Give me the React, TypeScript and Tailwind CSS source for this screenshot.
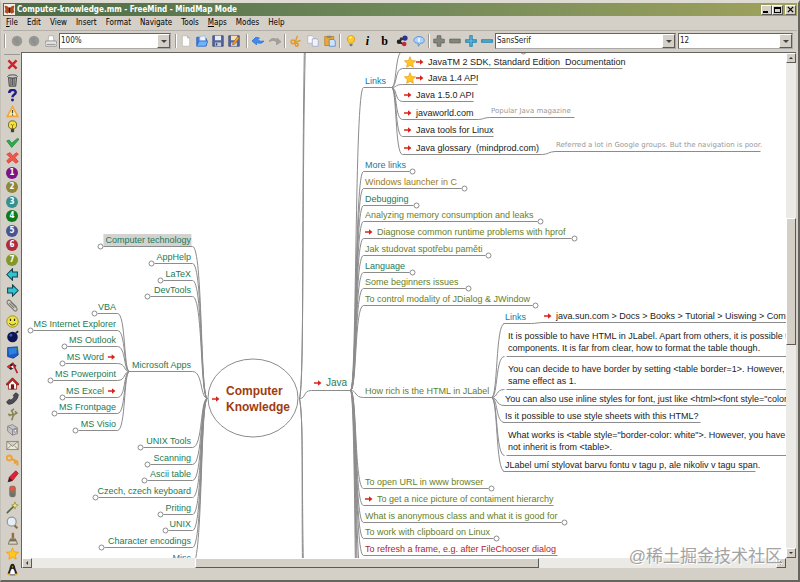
import { ReactNode } from "react";
import { twMerge } from "tailwind-merge";

type IconName = keyof typeof ICONS;

// every glyph is drawn on a 16x16 grid
const ICONS = {
  disc: (
    <>
      <circle cx="8" cy="8" r="7" fill="#989894" />
      <path d="M4 5l3-2 4 1-2 3 3 2-3 4-4-3z" fill="#8f8f8b" />
    </>
  ),
  printer: (
    <>
      <path d="M5 1h6l1 7H4z" fill="#fff" stroke="#aaa" />
      <path d="M1 8h14l1 5-1 2H1l-1-2z" fill="#e4e4e4" stroke="#888" />
      <path d="M2 12.500h12" stroke="#777" />
    </>
  ),
  page: (
    <path d="M3 1h7l3 3v11H3zM10 1v3h3" fill="#fdfdfd" stroke="#b4b4b0" />
  ),
  open: (
    <>
      <path d="M1 14V3h5l1 2h7v9z" fill="#3f7ee0" stroke="#2256b5" />
      <path d="M5 2l7-1 1 7H5z" fill="#eef5ff" stroke="#8fb0e0" />
      <path d="M1 15L4 8h12l-3 7z" fill="#6fb4f7" stroke="#2864c8" />
    </>
  ),
  save: (
    <>
      <path d="M1 1h14v14H1z" fill="#5565a0" stroke="#3b4677" />
      <path d="M4 1h8v6H4z" fill="#e8ecf4" />
      <path d="M4 10h8v5H4z" fill="#c8ccd6" />
      <path d="M5 11h2v3H5z" fill="#39416b" />
    </>
  ),
  saveAs: (
    <>
      <path d="M1 1h14v14H1z" fill="#5565a0" stroke="#3b4677" />
      <path d="M4 1h8v6H4z" fill="#f3e4b0" />
      <path d="M4 10h8v5H4z" fill="#c8ccd6" />
      <path d="M6 13l1-3 6-8 2 2-6 8z" fill="#f4a82a" stroke="#a8641a" />
    </>
  ),
  undo: (
    <path
      d="M5 3L0 8l6 5v-3c4 2 8 1 10-2-4 1-7 0-8-2l2-2z"
      fill="#3c8cf0"
      stroke="#2a6fd0"
    />
  ),
  redo: (
    <path
      d="M11 4l5 5-6 4v-3C9 7 5 6 0 9c1-4 6-6 10-3z"
      fill="#a2a29c"
      stroke="#96968f"
    />
  ),
  cut: (
    <>
      <path d="M10 1L7 9M14 7L7 10" stroke="#d6a23c" strokeWidth="2" />
      <circle cx="4" cy="9" r="2.500" fill="none" stroke="#e8982a" strokeWidth="2" />
      <circle cx="9" cy="13" r="2" fill="none" stroke="#e8982a" strokeWidth="2" />
    </>
  ),
  copy: (
    <>
      <path d="M1 1h6l2 2v8H1z" fill="#fafaff" stroke="#a9adbd" />
      <path d="M7 5h6l2 2v8H7z" fill="#f0f2fb" stroke="#9ba0b8" />
    </>
  ),
  paste: (
    <>
      <path d="M1 2h12v12H1z" fill="#e9a93a" stroke="#b87c20" />
      <path d="M4 1h6v3H4z" fill="#888" />
      <path d="M7 6h6l2 2v7H7z" fill="#cfe2fb" stroke="#4b7dc6" />
    </>
  ),
  bulb: (
    <>
      <path
        d="M8 1c-3 0-5 2-5 4.500C3 8 5 9 6 11h4c1-2 3-3 3-5.500C13 3 11 1 8 1z"
        fill="#ffc928"
        stroke="#d18f15"
      />
      <path d="M6 4c1-1 2-1 3-1" stroke="#fff6c0" strokeWidth="2" />
      <path d="M6 12h4v2H9v1H7v-1H6z" fill="#77776f" />
    </>
  ),
  nodes: (
    <>
      <path d="M4 8l7-4M4 9l7 4" stroke="#222" strokeWidth="2" />
      <circle cx="4" cy="9" r="3" fill="#222" />
      <circle cx="12" cy="4" r="3.500" fill="#27349c" />
      <circle cx="11" cy="12" r="3" fill="#c22a36" />
      <circle cx="7" cy="5" r="2" fill="#334" />
    </>
  ),
  cloud: (
    <>
      <path
        d="M8 2c4 0 7 2 7 5s-2 4-5 4l-3 4V11C3 11 1 9 1 7s3-5 7-5z"
        fill="#a9d3fa"
        stroke="#3f84d6"
      />
      <path d="M8 4v5" stroke="#fff" strokeWidth="2" />
    </>
  ),
  plusGray: (
    <path
      d="M5.500 1h5v4.500H15v5h-4.500V15h-5v-4.500H1v-5h4.500z"
      fill="#85857d"
      stroke="#5c5c55"
    />
  ),
  minusGray: <path d="M1 5.500h14v5H1z" fill="#85857d" stroke="#5c5c55" />,
  plusBlue: (
    <path
      d="M6.500 1h3v5.500H15v3H9.500V15h-3V9.500H1v-3h5.500z"
      fill="#6cc4e6"
      stroke="#2683ae"
      strokeWidth="1.500"
    />
  ),
  minusBlue: (
    <path d="M1 6.500h14v3H1z" fill="#6cc4e6" stroke="#2683ae" strokeWidth="1.500" />
  ),
  remove: (
    <path d="M3 3l10 10M13 3L3 13" stroke="#d3202c" strokeWidth="3" />
  ),
  trash: (
    <>
      <path d="M3 4h10l-1 11H4z" fill="#aaa" stroke="#333" />
      <path d="M6 5v9M8 5v9M10 5v9" stroke="#444" />
      <ellipse cx="8" cy="3" rx="6" ry="2" fill="#ccc" stroke="#333" />
    </>
  ),
  help: (
    <>
      <path
        d="M4 5c0-5 8-5 8-1 0 3-4 2.500-4 6"
        fill="none"
        stroke="#1c1c86"
        strokeWidth="3"
      />
      <circle cx="8" cy="13.500" r="1.800" fill="#1c1c86" />
    </>
  ),
  warning: (
    <>
      <path d="M8 2l6.500 12h-13z" fill="#fff0a8" stroke="#efa63a" strokeWidth="2" />
      <path d="M8 6v4M8 11.500v1.500" stroke="#444" strokeWidth="1.500" />
    </>
  ),
  idea: (
    <>
      <circle cx="8" cy="6" r="5" fill="#f9e23c" stroke="#55501a" />
      <path d="M6 5l2 2 2-2M8 7v4" fill="none" stroke="#6c5d14" />
      <path d="M6 11h4v4H6z" fill="#44443c" />
    </>
  ),
  check: (
    <path d="M1 6l3-1 3 4 7-6 2 1-9 10z" fill="#2bb24e" stroke="#13863a" />
  ),
  cross: (
    <path
      d="M1 4l4-2 3 4 5-4 2 2-4 4 4 5-3 2-4-4-5 4-2-3 4-4z"
      fill="#f0574a"
      stroke="#cf3a33"
    />
  ),
  back: (
    <path
      d="M1 8l7-7v4h6v6H8v4z"
      fill="#2fc4d4"
      stroke="#15424c"
      strokeWidth="1.300"
    />
  ),
  forward: (
    <path
      d="M15 8L8 1v4H2v6h6v4z"
      fill="#2fc4d4"
      stroke="#15424c"
      strokeWidth="1.300"
    />
  ),
  clip: (
    <path
      d="M6 4l7 7c2 3-1 5-3 3L2 6C0 3 3 0 5 2l8 8M4 5l6 6"
      fill="none"
      stroke="#77776f"
      strokeWidth="1.300"
    />
  ),
  smile: (
    <>
      <circle cx="8" cy="8" r="7" fill="#f1e53a" stroke="#8c861e" />
      <path d="M5.500 4.500v3M10.500 4.500v3" stroke="#222" strokeWidth="1.500" />
      <path d="M4 10c2 3 6 3 8 0" fill="none" stroke="#222" />
    </>
  ),
  bomb: (
    <>
      <circle cx="8" cy="8.500" r="6.500" fill="#0c1550" />
      <path d="M12 4l2-2 1 1" fill="none" stroke="#223" strokeWidth="2" />
      <circle cx="6" cy="6.500" r="1.800" fill="#3c5ab4" />
    </>
  ),
  desktop: (
    <>
      <path d="M2 2l12-1 1 10-6 4-7-2z" fill="#1c5cc4" stroke="#123c8a" />
      <path d="M3 3l10-1v7l-9 2z" fill="#2d80e4" />
      <path d="M10 2h4v3z" fill="#3c9a4c" />
    </>
  ),
  // checkered flag on a slanted pole
  flag: (
    <>
      <path d="M1 7l7-5 5 4-7 5z" fill="#222" />
      <path d="M1 7l3-2 3 2-3 2z" fill="#e22a33" />
      <path d="M6 7l3-2 2 2-3 2z" fill="#fff" />
      <path d="M8 2l6 13" stroke="#bb1c24" strokeWidth="2" />
    </>
  ),
  home: (
    <>
      <path d="M3 8l5-5 5 5v7H3z" fill="#fff" stroke="#8c1913" />
      <path d="M0 9l8-8 8 8-2 1-6-6-6 6z" fill="#d12a1e" stroke="#7d1611" />
      <path d="M6 9h4v6H6z" fill="#7d1611" />
    </>
  ),
  phone: (
    <path
      d="M1 12l3-3 2 1c2-1 3-3 4-4L9 4l3-3 3 2c0 6-6 12-11 12-2 0-3-2-3-3z"
      fill="#4c4c54"
      stroke="#2c2c33"
    />
  ),
  tree: (
    <path
      d="M7 15l2-6M9 9l4-3M8 8L4 9M9 8L7 3l3-2M3 7l2 3M11 4l3 3"
      fill="none"
      stroke="#85854e"
      strokeWidth="2"
    />
  ),
  mailbox: (
    <>
      <path d="M2 4l6-2 6 4v7l-6 2-6-5z" fill="#c4c4c8" stroke="#7c7c84" />
      <path d="M8 8v7M2 4l6 4 6-2" fill="none" stroke="#7c7c84" />
      <path d="M10 8h3v3h-3z" fill="#fff" stroke="#888" />
    </>
  ),
  envelope: (
    <path
      d="M1 3h14v10H1zM1 3l7 6 7-6M1 13l5-5M15 13l-5-5"
      fill="#ece9d8"
      stroke="#7b7b6c"
    />
  ),
  key: (
    <>
      <circle cx="4" cy="5" r="3" fill="none" stroke="#f0a53c" strokeWidth="2.500" />
      <path d="M7 6l8 4M11 8v4M14 10v4" stroke="#eba030" strokeWidth="2.500" />
    </>
  ),
  pencil: (
    <>
      <path d="M4 9l8-8 3 3-7 9-4 1z" fill="#e42035" stroke="#a51524" />
      <path d="M4 9l4 4-6 2z" fill="#3c2022" />
    </>
  ),
  lights: (
    <>
      <rect x="4" y="1" width="8" height="14" rx="3" fill="#77726e" />
      <circle cx="8" cy="4.500" r="3" fill="#f0523c" />
      <circle cx="8" cy="8.500" r="1.800" fill="#8a7a50" />
      <circle cx="8" cy="12" r="1.800" fill="#5c7a62" />
    </>
  ),
  wand: (
    <>
      <path d="M1 15l9-9" stroke="#55664a" strokeWidth="2" />
      <path d="M11 1l1 3 3 1-3 2-1 3-1-3-3-2 3-1z" fill="#f2e48a" stroke="#96963c" />
    </>
  ),
  magnifier: (
    <>
      <path d="M10 11l4 4" stroke="#8c6a3c" strokeWidth="2.500" />
      <circle cx="7" cy="7" r="5.500" fill="#e4eef4" stroke="#92989c" strokeWidth="1.500" />
    </>
  ),
  brush: (
    <>
      <path d="M7 1h3v7H7z" fill="#a06c32" />
      <path d="M5 8h7l1 3H4z" fill="#77776f" />
      <path d="M4 11h9l1 4H3z" fill="#ddd6b8" stroke="#6b654c" />
    </>
  ),
  star: (
    <path
      d="M8 1l2 5 5.500.5-4 3.500 1 5L8 12.500 3.500 15l1-5L.5 6.500 6 6z"
      fill="#ffc81e"
      stroke="#ef9c1c"
    />
  ),
  penguin: (
    <>
      <path d="M8 1c3 0 3 4 4 7l2 5-3 2H5l-3-2 2-5c1-3 1-7 4-7z" fill="#222" />
      <path d="M8 7c2 0 3 4 3 7H5c0-3 1-7 3-7z" fill="#fff" />
      <path d="M7 4h2l-1 2zM2 13h3v2H2zM11 13h3v2h-3z" fill="#eeb02a" />
    </>
  ),
  arrow: (
    <path d="M0 6.500h8V2.500l7 5.500-7 5.500v-4H0z" fill="#d6261c" />
  ),
  butterfly: (
    <>
      <path d="M0 0h16v16H0z" fill="#f4eee4" />
      <path d="M8 7C6 3 3 2 1 3l1 5-1 4 4 2 3-3 3 3 4-2-1-4 1-5c-2-1-5 0-7 4z" fill="#b04a1c" />
      <path d="M8 5v8" stroke="#3c1a0c" strokeWidth="2" />
    </>
  ),
};

function Icon({ name, className }: { name: IconName; className?: string }) {
  return (
    <svg
      viewBox="0 0 16 16"
      className={twMerge("size-3 shrink-0", className)}
      fill="none"
      aria-hidden="true"
    >
      {ICONS[name]}
    </svg>
  );
}

const RAISED =
  "border border-t-white border-l-white border-r-[#5c5a55] border-b-[#5c5a55] bg-[#d4d0c8]";

const MENU = [
  "File",
  "Edit",
  "View",
  "Insert",
  "Format",
  "Navigate",
  "Tools",
  "Maps",
  "Modes",
  "Help",
];

function TitleBar() {
  return (
    <header className="flex h-[13px] items-center gap-[2px] bg-linear-to-r from-[#4d6b47] via-[#70895a] to-[#a0a25c] px-px">
      <Icon name="butterfly" className="size-[11px]" />
      <h1 className="flex-1 text-[8px] leading-none font-bold whitespace-nowrap text-white">
        Computer-knowledge.mm - FreeMind - MindMap Mode
      </h1>
      <div className="flex">
        <button
          aria-label="Minimize"
          className={twMerge("flex h-[10px] w-[11px] items-end p-px", RAISED)}
        >
          <span className="h-[2px] w-[5px] bg-black" />
        </button>
        <button
          aria-label="Maximize"
          className={twMerge("h-[10px] w-[11px] p-px", RAISED)}
        >
          <span className="block h-full border border-t-2 border-black" />
        </button>
        <button
          aria-label="Close"
          className={twMerge(
            "ml-[2px] flex h-[10px] w-[11px] items-center justify-center",
            RAISED,
          )}
        >
          <svg viewBox="0 0 8 8" className="size-[7px]" aria-hidden="true">
            <path d="M1 1l6 6M7 1L1 7" stroke="#000" strokeWidth="1.500" />
          </svg>
        </button>
      </div>
    </header>
  );
}

function MenuBar() {
  return (
    <nav className="flex h-[15px] items-center gap-[9px] border-b border-[#b2afa8] px-[3px] text-[8px] text-black">
      {MENU.map((m) => (
        <button key={m} className="leading-none">
          {m === "File" || m === "Maps" ? (
            <>
              <u>{m[0]}</u>
              {m.slice(1)}
            </>
          ) : (
            m
          )}
        </button>
      ))}
    </nav>
  );
}

function Combo({
  label,
  value,
  className,
}: {
  label: string;
  value: string;
  className?: string;
}) {
  return (
    <label
      className={twMerge(
        "relative flex h-4 border border-t-[#66645f] border-l-[#66645f] border-r-[#aaa] border-b-[#aaa] bg-white",
        className,
      )}
    >
      <select
        aria-label={label}
        className="h-full w-full appearance-none bg-transparent px-px text-[8px] leading-[14px] text-[#222] outline-none"
      >
        <option>{value}</option>
      </select>
      <span
        className={twMerge(
          "pointer-events-none absolute inset-y-0 right-0 flex w-[13px] items-center justify-center",
          RAISED,
        )}
      >
        <svg viewBox="0 0 6 3" className="h-[3px] w-[6px]" aria-hidden="true">
          <path d="M0 0h6L3 3z" fill="#444" />
        </svg>
      </span>
    </label>
  );
}

function Divider() {
  return (
    <span className="mx-px h-[14px] w-[2px] shrink-0 border-l border-[#9c9a94] bg-white" />
  );
}

function ToolButton({
  label,
  className,
  children,
}: {
  label: string;
  className?: string;
  children: ReactNode;
}) {
  return (
    <button
      aria-label={label}
      className={twMerge(
        "flex h-4 w-[17px] shrink-0 items-center justify-center",
        className,
      )}
    >
      {children}
    </button>
  );
}

function Tools({
  items,
  className,
}: {
  items: [IconName, string][];
  className?: string;
}) {
  return items.map(([icon, label]) => (
    <ToolButton key={label} label={label} className={className}>
      <Icon name={icon} />
    </ToolButton>
  ));
}

function ToolBar() {
  return (
    <div className="flex h-5 items-center pr-1">
      <Divider />
      <span className="w-px" />
      <Tools
        items={[
          ["disc", "Previous map"],
          ["disc", "Next map"],
          ["printer", "Print"],
        ]}
      />
      <Combo label="Zoom" value="100%" className="w-[112px]" />
      <span className="w-[3px]" />
      <Divider />
      <Tools
        className="w-4"
        items={[
          ["page", "New"],
          ["open", "Open"],
          ["save", "Save"],
          ["saveAs", "Save as"],
        ]}
      />
      <span className="w-[3px]" />
      <Divider />
      <Tools
        items={[
          ["undo", "Undo"],
          ["redo", "Redo"],
        ]}
      />
      <Divider />
      <Tools
        items={[
          ["cut", "Cut"],
          ["copy", "Copy"],
          ["paste", "Paste"],
        ]}
      />
      <Divider />
      <ToolButton label="Blinking node">
        <Icon name="bulb" />
      </ToolButton>
      <ToolButton
        label="Italic"
        className="font-['Liberation_Serif',serif] text-[12px] leading-none font-bold italic"
      >
        i
      </ToolButton>
      <ToolButton
        label="Bold"
        className="font-['Liberation_Serif',serif] text-[12px] leading-none font-bold"
      >
        b
      </ToolButton>
      <Tools
        items={[
          ["nodes", "Node style"],
          ["cloud", "Cloud"],
        ]}
      />
      <Divider />
      <Tools
        className="w-4"
        items={[
          ["plusGray", "Increase branch font"],
          ["minusGray", "Decrease branch font"],
          ["plusBlue", "Increase node font"],
          ["minusBlue", "Decrease node font"],
        ]}
      />
      <Combo label="Font" value="SansSerif" className="flex-1" />
      <Combo label="Font size" value="12" className="ml-[2px] w-[115px]" />
    </div>
  );
}

const PRIORITIES = [
  "bg-[#7c1485]",
  "bg-[#8f8636]",
  "bg-[#369090]",
  "bg-[#0b7a1c]",
  "bg-[#4c5490]",
  "bg-[#ad2c3c]",
  "bg-[#83982c]",
];

const SIDE_TOP: IconName[] = [
  "remove",
  "trash",
  "help",
  "warning",
  "idea",
  "check",
  "cross",
];

const SIDE_BOTTOM: IconName[] = [
  "back",
  "forward",
  "clip",
  "smile",
  "bomb",
  "desktop",
  "flag",
  "home",
  "phone",
  "tree",
  "mailbox",
  "envelope",
  "key",
  "pencil",
  "lights",
  "wand",
  "magnifier",
  "brush",
  "star",
  "penguin",
];

function SideBar() {
  return (
    <aside className="flex w-[18px] flex-col pt-[3px]">
      <hr className="mx-px border-t border-[#9c9a94]" />
      <div className="mt-[3px] flex flex-1 flex-col items-center justify-between">
        {SIDE_TOP.map((s) => (
          <button key={s} aria-label={s}>
            <Icon name={s} className="size-[13px]" />
          </button>
        ))}
        {PRIORITIES.map((color, i) => (
          <button
            key={color}
            className={twMerge(
              "flex size-3 items-center justify-center rounded-full text-[8px] leading-none font-bold text-white",
              color,
            )}
          >
            {i + 1}
          </button>
        ))}
        {SIDE_BOTTOM.map((s) => (
          <button key={s} aria-label={s}>
            <Icon name={s} className="size-[13px]" />
          </button>
        ))}
      </div>
    </aside>
  );
}

const TEAL = "text-[#1d7a52]";
const OLIVE = "text-[#66801f]";
const BLUE = "text-[#2478a4]";
const INK = "text-[#222]";
const GRAY = "text-[#999]";

type MapNode = {
  text: string;
  // text edge: left edge, or right edge when `flip` is set
  x: number;
  // height of the underline
  y: number;
  // far end of the underline
  end: number;
  fold?: boolean;
  flip?: boolean;
  arrow?: boolean;
  star?: boolean;
  selected?: boolean;
  note?: boolean;
  color: string;
};

// the map is scrolled so that this point sits in the top left corner
const SCROLL = { x: 22, y: 53 };

const left = (
  x: number,
  text: string,
  y: number,
  end: number,
  more?: Partial<MapNode>,
): MapNode => ({ text, x, y, end, flip: true, fold: true, color: TEAL, ...more });

const right = (
  x: number,
  text: string,
  y: number,
  end: number,
  color: string,
  more?: Partial<MapNode>,
): MapNode => ({ text, x, y, end, color, ...more });

const ROOT_LEFT = [
  left(191, "Computer technology", 246, 100, { selected: true }),
  left(191, "AppHelp", 263, 151),
  left(191, "LaTeX", 280, 160),
  left(191, "DevTools", 296, 147),
  left(191, "Microsoft Apps", 371, 129, { fold: false }),
  left(191, "UNIX Tools", 447, 140),
  left(191, "Scanning", 464, 147),
  left(191, "Ascii table", 480, 144),
  left(191, "Czech, czech keyboard", 497, 95),
  left(191, "Priting", 514, 160),
  left(191, "UNIX", 530, 165),
  left(191, "Character encodings", 547, 101),
  left(191, "Misc", 564, 165, { color: BLUE }),
];

const MS_APPS = [
  left(116, "VBA", 313, 94),
  left(116, "MS Internet Explorer", 330, 30),
  left(116, "MS Outlook", 346, 64),
  left(116, "MS Word", 363, 62, { arrow: true }),
  left(116, "MS Powerpoint", 380, 50),
  left(116, "MS Excel", 397, 62, { arrow: true }),
  left(116, "MS Frontpage", 413, 54),
  left(116, "MS Visio", 430, 75),
];

const JAVA = [
  right(365, "Links", 87, 391, BLUE),
  right(365, "More links", 171, 412, BLUE, { fold: true }),
  right(365, "Windows launcher in C", 188, 464, "text-[#9a7a22]", { fold: true }),
  right(365, "Debugging", 205, 416, TEAL, { fold: true }),
  right(365, "Analyzing memory consumption and leaks", 221, 540, OLIVE, { fold: true }),
  right(365, "Diagnose common runtime problems with hprof", 238, 574, OLIVE, {
    fold: true,
    arrow: true,
  }),
  right(365, "Jak studovat spotřebu paměti", 255, 488, OLIVE, { fold: true }),
  right(365, "Language", 272, 412, TEAL, { fold: true }),
  right(365, "Some beginners issues", 288, 468, OLIVE, { fold: true }),
  right(365, "To control modality of JDialog & JWindow", 305, 535, OLIVE, { fold: true }),
  right(365, "How rich is the HTML in JLabel", 397, 491, OLIVE),
  right(365, "To open URL in www browser", 488, 491, OLIVE, { fold: true }),
  right(365, "To get a nice picture of contaiment hierarchy", 505, 553, OLIVE, {
    arrow: true,
  }),
  right(365, "What is anonymous class and what it is good for", 522, 564, OLIVE, {
    fold: true,
  }),
  right(365, "To work with clipboard on Linux", 538, 496, OLIVE, { fold: true }),
  right(365, "To refresh a frame, e.g. after FileChooser dialog", 555, 557, "text-[#b01c2c]"),
];

const LINKS = [
  right(404, "JavaTM 2 SDK, Standard Edition  Documentation", 68, 622, INK, {
    arrow: true,
    star: true,
  }),
  right(404, "Java 1.4 API", 84, 477, INK, { arrow: true, star: true }),
  right(404, "Java 1.5.0 API", 101, 473, INK, { arrow: true }),
  right(404, "javaworld.com", 119, 478, INK, { arrow: true }),
  right(404, "Java tools for Linux", 136, 493, INK, { arrow: true }),
  right(404, "Java glossary  (mindprod.com)", 154, 542, INK, { arrow: true }),
];

const HTML = [
  right(505, "Links", 323, 531, BLUE),
  right(
    508,
    "It is possible to have HTML in JLabel. Apart from others, it is possible to\ncomponents. It is far from clear, how to format the table though.",
    356,
    800,
    INK,
  ),
  right(
    508,
    "You can decide to have border by setting <table border=1>. However, o\nsame effect as 1.",
    389,
    800,
    INK,
  ),
  right(
    505,
    'You can also use inline styles for font, just like <html><font style="color:',
    405,
    800,
    INK,
  ),
  right(505, "Is it possible to use style sheets with this HTML?", 422, 700, INK),
  right(
    508,
    'What works is <table style="border-color: white">. However, you have to\nnot inherit is from <table>.',
    455,
    800,
    INK,
  ),
  right(505, "JLabel umí stylovat barvu fontu v tagu p, ale nikoliv v tagu span.", 471, 755, INK),
];

const LEAVES = [
  right(491, "Popular Java magazine", 117, 574, GRAY, { note: true }),
  right(556, "Referred a lot in Google groups. But the navigation is poor.", 151, 760, GRAY, {
    note: true,
  }),
  right(544, "java.sun.com > Docs > Books > Tutorial > Uiswing > Comp", 322, 800, INK, {
    arrow: true,
  }),
];

const NODES = [...ROOT_LEFT, ...MS_APPS, ...JAVA, ...LINKS, ...HTML, ...LEAVES];

// children that are scrolled out of view still thicken the trunk
const JAVA_BELOW = [589, 640, 720, 860];

function branch(px: number, py: number, x: number, y: number) {
  const d = x - px;
  return `M${px} ${py}C${px + d * 0.5} ${py} ${px + d * 0.3} ${y} ${x} ${y}`;
}

const EDGES = [
  ...ROOT_LEFT.map((n) => branch(207, 398, 192, n.y)),
  ...MS_APPS.map((n) => branch(129, 371, 117, n.y)),
  ...JAVA.map((n) => branch(350, 390, 363, n.y)),
  ...JAVA_BELOW.map((y) => branch(350, 390, 363, y)),
  ...[51, ...LINKS.map((n) => n.y)].map((y) => branch(391, 87, 402, y)),
  ...HTML.map((n) => branch(491, 397, 504, n.y)),
  "M299 398C306 398 302 390 311 390H350",
  "M299 398C304 380 301 200 304 40",
  "M299 398C304 380 301 200 305 40",
  "M299 398C303 420 301 470 303 570",
  "M299 398C303 420 301 470 302 570",
  "M478 119C482 119 484 117 489 117",
  "M542 154C547 154 549 151 555 151",
  "M531 323C535 323 538 322 543 322",
];

function underline(n: MapNode) {
  if (n.flip) {
    return `M${n.x + 1} ${n.y}H${n.fold ? n.end + 3 : n.end}`;
  }
  return `M${n.x - 2} ${n.y}H${n.fold ? n.end - 3 : n.end}`;
}

function Branches() {
  return (
    <svg
      className="absolute inset-0 size-full"
      viewBox="22 53 765 505"
      preserveAspectRatio="xMinYMin slice"
      fill="none"
      stroke="#8c8c8c"
      aria-hidden="true"
    >
      {/* half a unit keeps the horizontal strokes on one pixel row */}
      <g transform="translate(0.500 0.500)">
        {EDGES.map((d, i) => (
          <path key={`edge-${i}`} d={d} />
        ))}
        {NODES.map((n) => (
          <g key={`${n.text}-${n.y}`}>
            <path d={underline(n)} />
            {n.fold && <circle cx={n.end} cy={n.y} r="2.500" fill="#fff" />}
          </g>
        ))}
        <circle cx="523" cy="51" r="2.500" fill="#fff" />
        <ellipse cx="252.500" cy="397.500" rx="45" ry="39" fill="#fff" />
      </g>
    </svg>
  );
}

function NodeLabel({ node }: { node: MapNode }) {
  return (
    <div
      className={twMerge(
        "absolute flex items-center gap-1 text-[9px] leading-[12px] whitespace-pre",
        node.color,
        node.flip && "-translate-x-full flex-row-reverse",
        node.selected && "bg-[#d2d2d2] pl-[2px]",
        node.note && "font-['DejaVu_Sans',sans-serif] text-[7px] leading-[12px]",
      )}
      style={{
        left: node.x - SCROLL.x,
        top: node.y - SCROLL.y - (node.text.includes("\n") ? 26 : 12),
      }}
    >
      {(node.star || node.arrow) && (
        <span className="flex items-center">
          {node.star && <Icon name="star" />}
          {node.arrow && <Icon name="arrow" className="size-2" />}
        </span>
      )}
      <span>{node.text}</span>
    </div>
  );
}

function MindMap() {
  return (
    <main className="relative flex-1 overflow-hidden bg-white">
      <Branches />
      {NODES.map((n) => (
        <NodeLabel key={`${n.text}-${n.y}`} node={n} />
      ))}
      <div className="absolute top-[330px] left-[190px] flex items-center gap-[6px] text-[12px] leading-4 font-bold text-[#a03c10]">
        <Icon name="arrow" className="size-2" />
        <span>
          Computer
          <br />
          Knowledge
        </span>
      </div>
      <div className="absolute top-[323px] left-[292px] flex items-center gap-1 text-[10px] leading-[14px] text-[#1d7a62]">
        <Icon name="arrow" className="size-2" />
        <span>Java</span>
      </div>
    </main>
  );
}

function ScrollArrow({ label, d }: { label: string; d: string }) {
  return (
    <button
      aria-label={label}
      className={twMerge(
        "flex size-[10px] shrink-0 items-center justify-center",
        RAISED,
      )}
    >
      <svg viewBox="0 0 4 4" className="size-1" aria-hidden="true">
        <path d={d} fill="#333" />
      </svg>
    </button>
  );
}

export default function App() {
  return (
    <div className="relative flex h-screen flex-col border-t-[3px] border-r-2 border-b-2 border-l border-t-[#dedbd3] border-r-[#66645f] border-b-[#66645f] border-l-[#c4c1b9] bg-[#d4d0c8] pr-px pl-[2px] font-['DejaVu_Sans_Condensed','DejaVu_Sans',sans-serif]">
      <TitleBar />
      <MenuBar />
      <ToolBar />
      <div className="flex min-h-0 flex-1 pb-[12px]">
        <div className="-mb-[8px] flex">
          <SideBar />
        </div>
        <div className="mt-px mr-px flex min-w-0 flex-1 flex-col border-t border-l border-[#66645f] font-['Liberation_Sans',Arial,sans-serif]">
          <div className="flex min-h-0 flex-1">
            <MindMap />
            <div className="flex w-[10px] flex-col bg-[#eceae6]">
              <ScrollArrow label="Scroll up" d="M0 3h4L2 1z" />
              <div className="flex-[32]" />
              <div className={twMerge("flex-[26]", RAISED)} />
              <div className="flex-[42]" />
              <ScrollArrow label="Scroll down" d="M0 1h4L2 3z" />
            </div>
          </div>
          <div className="flex h-[10px] pr-[10px]">
            <ScrollArrow label="Scroll left" d="M3 0v4L1 2z" />
            <div className="flex-[22] bg-[#eceae6]" />
            <div className={twMerge("flex-[46]", RAISED)} />
            <div className="flex-[32] bg-[#eceae6]" />
            <ScrollArrow label="Scroll right" d="M1 0v4l2-2z" />
          </div>
        </div>
      </div>
      <p className="absolute right-4 bottom-[11px] font-['Liberation_Sans','Noto_Sans_CJK_SC',sans-serif] text-[17px] leading-6 text-[#a4a2a2] [text-shadow:1px_1px_0_#fff]">
        @稀土掘金技术社区
      </p>
    </div>
  );
}
